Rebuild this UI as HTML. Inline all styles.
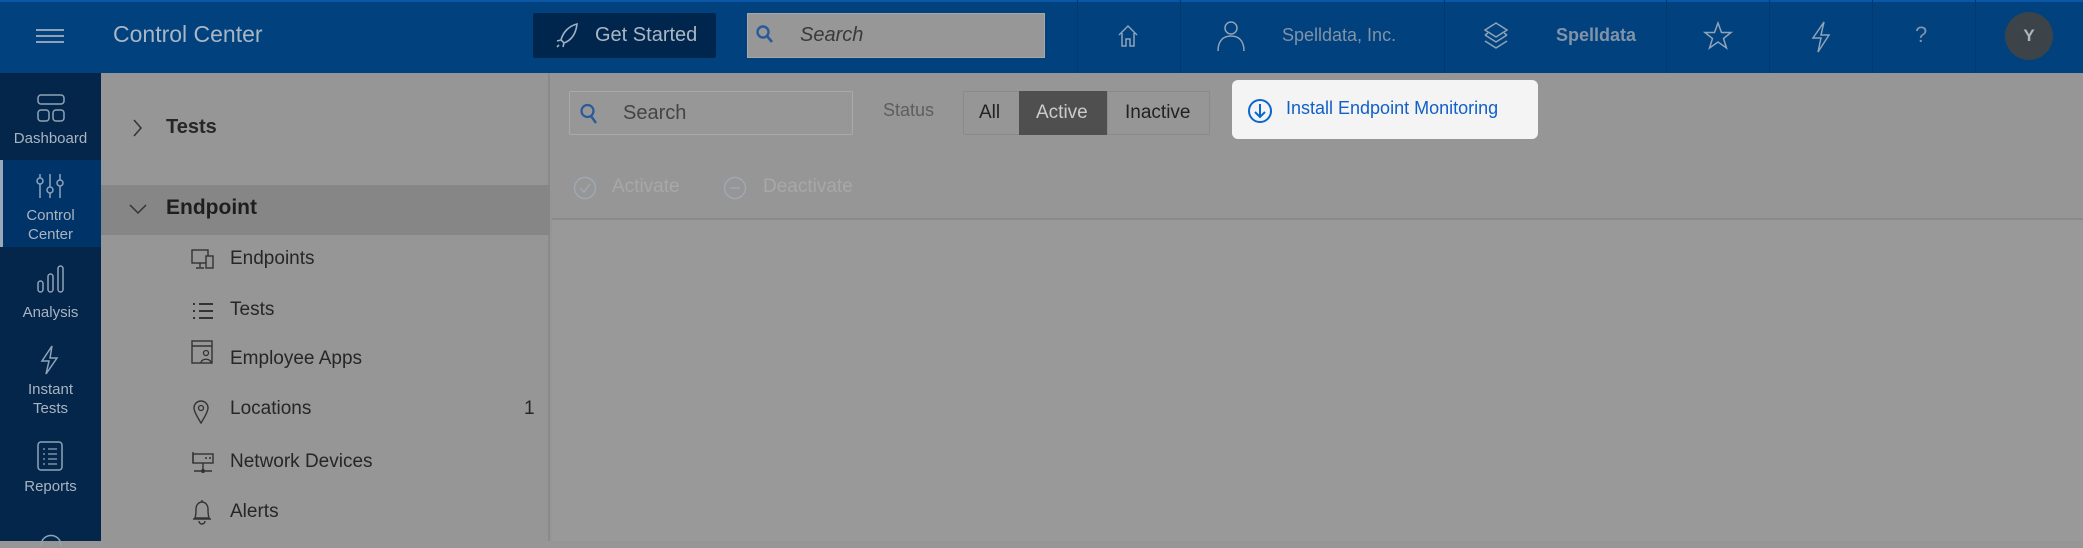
<!DOCTYPE html>
<html><head><meta charset="utf-8"><style>
*{box-sizing:border-box;margin:0;padding:0}
body{width:2083px;height:541px;overflow:hidden;background:#969696;font-family:"Liberation Sans",sans-serif;position:relative}
.a{position:absolute}
.hdr{left:0;top:0;width:2083px;height:73px;background:#00417e;border-top:2px solid #0a57a8}
.sep{top:0;width:1px;height:73px;background:#003a70}
.nav{left:0;top:73px;width:101px;height:468px;background:#04264b}
.nl{color:#a9b4c0;font-size:15px;text-align:center;width:101px;left:0;line-height:19px}
.panel{left:101px;top:73px;width:449px;height:468px;background:#969696;border-right:2px solid #8a8a8a}
.it{left:230px;font-size:19px;color:#262626}
svg{position:absolute;overflow:visible}
</style></head><body>
<div class="a hdr"></div>
<!-- hamburger -->
<div class="a" style="left:36px;top:29px;width:28px;height:2px;background:#8fa3b8"></div>
<div class="a" style="left:36px;top:35px;width:28px;height:2px;background:#8fa3b8"></div>
<div class="a" style="left:36px;top:41px;width:28px;height:2px;background:#8fa3b8"></div>
<div class="a" style="left:113px;top:21px;font-size:23px;color:#a9b6c4">Control Center</div>
<div class="a" style="left:533px;top:13px;width:183px;height:45px;background:#01264d;border-radius:2px"></div>
<svg style="left:555px;top:23px" width="24" height="26" viewBox="0 0 24 26"><path d="M22 1 C14 3 8 9 6 17 L9 20 C17 17 21 10 22 1Z M6 17 L2 18 M9 20 L8 24 M4 22 L2 24" fill="none" stroke="#9fb0c2" stroke-width="1.6"/></svg>
<div class="a" style="left:595px;top:24px;font-size:20px;color:#a9b6c4">Get Started</div>
<div class="a" style="left:747px;top:13px;width:298px;height:45px;background:#979797;border:1px solid #a7a7a7"></div>
<svg style="left:756px;top:25px" width="18" height="20"><circle cx="7" cy="7" r="5.5" fill="none" stroke="#2a5a9a" stroke-width="2.4"/><path d="M11 11 L16 17" stroke="#2a5a9a" stroke-width="2.6"/></svg>
<div class="a" style="left:800px;top:24px;font-size:20px;font-style:italic;color:#3a3a3a">Search</div>
<div class="a sep" style="left:1077px"></div><div class="a sep" style="left:1180px"></div><div class="a sep" style="left:1444px"></div><div class="a sep" style="left:1666px"></div><div class="a sep" style="left:1769px"></div><div class="a sep" style="left:1872px"></div><div class="a sep" style="left:1975px"></div>
<svg style="left:1117px;top:24px" width="22" height="24"><path d="M2 11 L11 2 L20 11 M5 9 V22 H9 V15 H13 V22 H17 V9" fill="none" stroke="#8fa3b8" stroke-width="1.5"/></svg>
<svg style="left:1216px;top:20px" width="30" height="32"><circle cx="15" cy="8" r="6" fill="none" stroke="#8fa3b8" stroke-width="1.5"/><path d="M2 31 C2 20 8 16 15 16 C22 16 28 20 28 31" fill="none" stroke="#8fa3b8" stroke-width="1.5"/></svg>
<div class="a" style="left:1282px;top:25px;font-size:18px;color:#8093a8">Spelldata, Inc.</div>
<svg style="left:1483px;top:22px" width="26" height="28"><path d="M13 1 L24 8 L13 15 L2 8Z M2 13 L13 20 L24 13 M2 19 L13 26 L24 19 M2 13 L5 11 M24 13 L21 11" fill="none" stroke="#8fa3b8" stroke-width="1.5"/></svg>
<div class="a" style="left:1556px;top:25px;font-size:18px;font-weight:bold;color:#8093a8">Spelldata</div>
<svg style="left:1704px;top:22px" width="28" height="28"><path d="M14 1 L17.5 10.5 L27 10.5 L19.5 16.5 L22.5 26 L14 20 L5.5 26 L8.5 16.5 L1 10.5 L10.5 10.5Z" fill="none" stroke="#8fa3b8" stroke-width="1.5"/></svg>
<svg style="left:1810px;top:21px" width="22" height="32"><path d="M14 1 L3 17 H11 L8 31 L19 14 H11 Z" fill="none" stroke="#8fa3b8" stroke-width="1.5"/></svg>
<div class="a" style="left:1915px;top:22px;font-size:22px;color:#8093a8">?</div>
<div class="a" style="left:2005px;top:12px;width:48px;height:48px;border-radius:50%;background:#3c4449;color:#b0b6bb;font-weight:bold;font-size:17px;text-align:center;line-height:48px">Y</div>

<div class="a nav"></div>
<div class="a" style="left:0;top:160px;width:101px;height:87px;background:#003468;border-left:3px solid #9aa9b8"></div>
<svg style="left:37px;top:94px" width="28" height="28"><rect x="1" y="1" width="26" height="9" rx="3" fill="none" stroke="#8fa3b8" stroke-width="1.5"/><rect x="1" y="16" width="11" height="11" rx="3" fill="none" stroke="#8fa3b8" stroke-width="1.5"/><rect x="16" y="16" width="11" height="11" rx="3" fill="none" stroke="#8fa3b8" stroke-width="1.5"/></svg>
<div class="a nl" style="top:129px">Dashboard</div>
<svg style="left:36px;top:173px" width="28" height="26"><path d="M4 1V25M14 1V25M24 1V25" stroke="#8fa3b8" stroke-width="1.5"/><circle cx="4" cy="8" r="3" fill="#003468" stroke="#8fa3b8" stroke-width="1.5"/><circle cx="14" cy="17" r="3" fill="#003468" stroke="#8fa3b8" stroke-width="1.5"/><circle cx="24" cy="10" r="3" fill="#003468" stroke="#8fa3b8" stroke-width="1.5"/></svg>
<div class="a nl" style="top:206px">Control<br>Center</div>
<svg style="left:37px;top:265px" width="28" height="28"><rect x="1" y="16" width="5" height="11" rx="2.5" fill="none" stroke="#8fa3b8" stroke-width="1.5"/><rect x="11" y="9" width="5" height="18" rx="2.5" fill="none" stroke="#8fa3b8" stroke-width="1.5"/><rect x="21" y="1" width="5" height="26" rx="2.5" fill="none" stroke="#8fa3b8" stroke-width="1.5"/></svg>
<div class="a nl" style="top:303px">Analysis</div>
<svg style="left:39px;top:345px" width="22" height="30"><path d="M13 1 L3 16 H10 L7 29 L18 13 H11 Z" fill="none" stroke="#8fa3b8" stroke-width="1.5"/></svg>
<div class="a nl" style="top:380px">Instant<br>Tests</div>
<svg style="left:37px;top:441px" width="26" height="30"><rect x="1" y="1" width="24" height="28" rx="3" fill="none" stroke="#8fa3b8" stroke-width="1.5"/><path d="M6 8H8M11 8H20M6 13H8M11 13H20M6 18H8M11 18H20M6 23H8M11 23H20" stroke="#8fa3b8" stroke-width="1.3"/></svg>
<div class="a nl" style="top:477px">Reports</div>
<svg style="left:38px;top:528px" width="26" height="20"><path d="M3 18 C3 4 23 4 23 18" fill="none" stroke="#8fa3b8" stroke-width="1.5"/></svg>

<div class="a panel"></div>
<div class="a" style="left:101px;top:185px;width:449px;height:50px;background:#868686"></div>
<svg style="left:133px;top:119px" width="10" height="18"><path d="M1 1 L8 9 L1 17" fill="none" stroke="#333" stroke-width="1.5"/></svg>
<div class="a" style="left:166px;top:116px;font-size:20px;font-weight:bold;color:#262626">Tests</div>
<svg style="left:129px;top:204px" width="18" height="10"><path d="M1 1 L9 9 L17 1" fill="none" stroke="#333" stroke-width="1.5"/></svg>
<div class="a" style="left:166px;top:196px;font-size:21px;font-weight:bold;color:#1e1e1e">Endpoint</div>
<svg style="left:191px;top:249px" width="24" height="22"><rect x="1" y="1" width="16" height="13" fill="none" stroke="#333" stroke-width="1.4"/><path d="M9 14V18M5 19H13" stroke="#333" stroke-width="1.4"/><rect x="15" y="7" width="7" height="12" fill="#969696" stroke="#333" stroke-width="1.4"/></svg>
<div class="a it" style="top:248px">Endpoints</div>
<svg style="left:192px;top:302px" width="22" height="18"><path d="M1 2H3M1 9H3M1 16H3M7 2H21M7 9H21M7 16H21" stroke="#333" stroke-width="2"/></svg>
<div class="a it" style="top:299px">Tests</div>
<svg style="left:191px;top:340px" width="24" height="24"><rect x="1" y="1" width="20" height="22" fill="none" stroke="#333" stroke-width="1.4"/><path d="M1 6H21" stroke="#333" stroke-width="1.4"/><circle cx="15" cy="13" r="2.5" fill="none" stroke="#333" stroke-width="1.3"/><path d="M10 23 C10 18 20 18 20 23" fill="none" stroke="#333" stroke-width="1.3"/></svg>
<div class="a it" style="top:348px">Employee Apps</div>
<svg style="left:193px;top:400px" width="16" height="24"><path d="M8 23 C3 15 1 11 1 8 A7 7 0 0 1 15 8 C15 11 13 15 8 23Z" fill="none" stroke="#333" stroke-width="1.4"/><circle cx="8" cy="8" r="2.5" fill="none" stroke="#333" stroke-width="1.3"/></svg>
<div class="a it" style="top:398px">Locations</div>
<div class="a" style="left:524px;top:398px;font-size:19px;color:#262626">1</div>
<svg style="left:191px;top:451px" width="24" height="24"><rect x="2" y="3" width="20" height="9" fill="none" stroke="#333" stroke-width="1.4"/><path d="M2 1V12M12 12V22M3 20H21M14 7H16M18 7H20" stroke="#333" stroke-width="1.4"/><circle cx="12" cy="20" r="2" fill="#333"/></svg>
<div class="a it" style="top:451px">Network Devices</div>
<svg style="left:191px;top:499px" width="22" height="26"><path d="M11 1V3 M4 19 C5 16 5 12 5 10 A6 7 0 0 1 17 10 C17 12 17 16 18 19 H4Z M2 20 H20 M8 22 A3 3 0 0 0 14 22" fill="none" stroke="#333" stroke-width="1.4"/></svg>
<div class="a it" style="top:501px">Alerts</div>

<!-- content -->
<div class="a" style="left:552px;top:218px;width:1531px;height:2px;background:#8a8a8a"></div>
<div class="a" style="left:552px;top:220px;width:1531px;height:321px;background:#999"></div>
<div class="a" style="left:569px;top:91px;width:284px;height:44px;background:#979797;border:1px solid #aaa;border-radius:2px"></div>
<svg style="left:580px;top:103px" width="18" height="22"><circle cx="7.5" cy="8" r="6" fill="none" stroke="#2a5a9a" stroke-width="2.2"/><path d="M11 13 L16 20" stroke="#2a5a9a" stroke-width="2.4"/></svg>
<div class="a" style="left:623px;top:102px;font-size:20px;color:#444">Search</div>
<div class="a" style="left:883px;top:100px;font-size:18px;color:#5e5e5e">Status</div>
<div class="a" style="left:963px;top:91px;width:247px;height:44px;border:1px solid #8a8a8a;border-radius:2px"></div>
<div class="a" style="left:1019px;top:91px;width:88px;height:44px;background:#4f4f4f"></div>
<div class="a" style="left:1107px;top:91px;width:1px;height:44px;background:#8a8a8a"></div>
<div class="a" style="left:979px;top:102px;font-size:19px;color:#222">All</div>
<div class="a" style="left:1036px;top:102px;font-size:19px;color:#ccc">Active</div>
<div class="a" style="left:1125px;top:102px;font-size:19px;color:#222">Inactive</div>
<div class="a" style="left:1232px;top:80px;width:306px;height:59px;background:#f4f4f4;border-radius:6px"></div>
<svg style="left:1247px;top:98px" width="26" height="26"><circle cx="13" cy="13" r="11" fill="none" stroke="#0a66d0" stroke-width="2"/><path d="M13 6V19M8 14L13 19L18 14" fill="none" stroke="#0a66d0" stroke-width="2"/></svg>
<div class="a" style="left:1286px;top:98px;font-size:18px;color:#1060c8">Install Endpoint Monitoring</div>
<svg style="left:573px;top:176px" width="24" height="24"><circle cx="12" cy="12" r="10.5" fill="none" stroke="#9fa9b5" stroke-width="1.4"/><path d="M7 12L11 16L17 8" fill="none" stroke="#9fa9b5" stroke-width="1.4"/></svg>
<div class="a" style="left:612px;top:176px;font-size:19px;color:#a8a8a8">Activate</div>
<svg style="left:723px;top:176px" width="24" height="24"><circle cx="12" cy="12" r="10.5" fill="none" stroke="#9fa9b5" stroke-width="1.4"/><path d="M7 12H17" stroke="#9fa9b5" stroke-width="1.4"/></svg>
<div class="a" style="left:763px;top:176px;font-size:19px;color:#a8a8a8">Deactivate</div>
</body></html>
